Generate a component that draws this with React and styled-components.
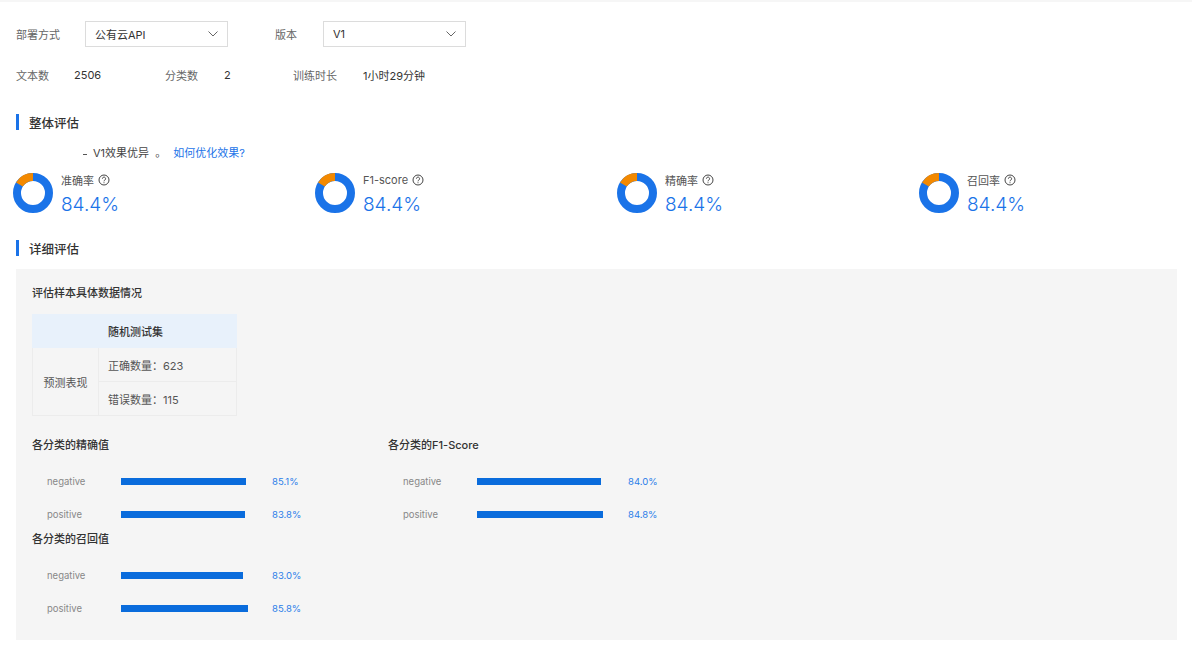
import styled, { createGlobalStyle } from "styled-components";

const GlobalStyle = createGlobalStyle`
  html, body {
    margin: 0;
    padding: 0;
    background: #fff;
    font-family: Inter, "Noto Sans CJK SC", sans-serif;
    color: #333;
  }
`;

const Page = styled.div`
  box-sizing: border-box;
  width: 1192px;
  height: 653px;
  overflow: hidden;
  padding: 21px 15px 0 16px;
  border-top: 2px solid #f6f6f6;
`;

const FilterRow = styled.div`
  display: flex;
  align-items: center;
  height: 26px;
  margin-top: -2px;
`;

const FilterLabel = styled.span`
  width: ${p => p.$width}px;
  font-size: 11px;
  color: #666;
`;

const Select = styled.div`
  box-sizing: border-box;
  display: flex;
  align-items: center;
  justify-content: space-between;
  width: 143px;
  height: 26px;
  padding: 0 8px 0 9px;
  margin-right: ${p => p.$gap || 0}px;
  background: #fff;
  border: 1px solid #dcdcdc;
  font-size: 11px;
  color: #333;
`;

const StatRow = styled.div`
  display: flex;
  align-items: center;
  height: 16px;
  margin-top: 20px;
  font-size: 11px;
`;

const StatLabel = styled.span`
  width: ${p => p.$width}px;
  color: #666;
`;

const StatValue = styled.span`
  width: ${p => p.$width}px;
  color: #333;
`;

const SectionTitle = styled.h2`
  display: flex;
  align-items: center;
  height: 16px;
  margin: ${p => p.$top}px 0 0;
  padding-left: 10px;
  border-left: 3px solid #1a73e8;
  font-size: 12.5px;
  font-weight: 500;
  color: #333;
`;

const Summary = styled.div`
  display: flex;
  align-items: center;
  height: 14px;
  margin-top: 15px;
  padding-left: 67px;
  font-size: 11px;
  color: #444;
`;

const Tick = styled.i`
  width: 4px;
  height: 1px;
  margin: 4px 6px 0 0;
  background: #555;
`;

const HelpLink = styled.a`
  margin-left: 7px;
  color: #1a73e8;
`;

const Metrics = styled.div`
  display: grid;
  grid-template-columns: repeat(4, 302px);
  margin: 14px 0 0 -3px;
`;

const Metric = styled.div`
  display: flex;
  gap: 8px;
  align-items: flex-start;
  height: 40px;
`;

const MetricText = styled.div`
  display: flex;
  flex-direction: column;
`;

const MetricName = styled.div`
  display: flex;
  align-items: center;
  gap: 4px;
  height: 14px;
  font-size: 11px;
  color: #555;
`;

const MetricValue = styled.div`
  height: 27px;
  margin-top: 4px;
  font-size: 19px;
  font-weight: 300;
  line-height: 27px;
  color: #1a73e8;
`;

const Panel = styled.section`
  box-sizing: border-box;
  height: 371px;
  margin-top: 13px;
  padding: 17px 16px 0;
  background: #f5f5f5;
`;

const PanelTitle = styled.h3`
  margin: 0;
  height: 14px;
  font-size: 11px;
  font-weight: 500;
  line-height: 14px;
  color: #333;
`;

const Table = styled.div`
  display: grid;
  grid-template-columns: 67px 138px;
  grid-template-rows: 34px 34px 34px;
  width: 205px;
  margin-top: 14px;
  font-size: 11px;
  color: #555;
`;

const TableHead = styled.div`
  grid-column: 1 / 3;
  display: flex;
  align-items: center;
  padding-left: 76px;
  background: #e8f1fb;
  font-weight: 500;
  color: #333;
`;

const TableSide = styled.div`
  grid-row: 2 / 4;
  display: flex;
  align-items: center;
  justify-content: center;
  border: 1px solid #ececec;
  border-top: 0;
`;

const TableCell = styled.div`
  display: flex;
  align-items: center;
  padding-left: 9px;
  border-right: 1px solid #ececec;
  border-bottom: 1px solid #ececec;
`;

const ChartGrid = styled.div`
  display: grid;
  grid-template-columns: 356px 356px;
  margin-top: 22px;
`;

const ChartBlock = styled.div`
  height: 94px;
`;

const ChartTitle = styled.h4`
  margin: 0 0 22.5px;
  height: 14px;
  font-size: 11px;
  font-weight: 500;
  line-height: 14px;
  color: #333;
`;

const ChartRows = styled.div`
  display: flex;
  flex-direction: column;
  gap: 18.5px;
`;

const ChartRow = styled.div`
  display: flex;
  align-items: center;
  height: 14px;
  font-size: 9.5px;
  color: #888;
`;

const ChartLabel = styled.span`
  box-sizing: border-box;
  width: 89px;
  padding-left: 15px;
`;

const BarTrack = styled.div`
  width: 151px;
`;

const Bar = styled.div`
  height: 7px;
  background: #0a6cdc;
`;

const ChartValue = styled.span`
  color: #2b7de9;
`;

const Chevron = () => (
  <svg width="12" height="12" viewBox="0 0 12 12" fill="none" stroke="#666" strokeWidth="1">
    <path d="M1.5 3.5 6 8 10.5 3.5" />
  </svg>
);

const HelpIcon = () => (
  <svg width="12" height="12" viewBox="0 0 12 12" fill="none" stroke="#444" strokeWidth="1">
    <circle cx="6" cy="6" r="5" />
    <path d="M4.4 4.7a1.6 1.6 0 1 1 2.5 1.3c-.6.4-.9.7-.9 1.3" />
    <path d="M6 8.3v.9" />
  </svg>
);

// ring with the orange share ending at 12 o'clock
const Donut = () => (
  <svg width="40" height="40" viewBox="0 0 40 40" fill="none" strokeWidth="8">
    <circle cx="20" cy="20" r="16" stroke="#1a73e8" />
    <path d="M6.4 11.5A16 16 0 0 1 20 4" stroke="#f38900" />
  </svg>
);

const metrics = ["准确率", "F1-score", "精确率", "召回率"];

const charts = [
  {
    title: "各分类的精确值",
    rows: [
      ["negative", 85.1, 125],
      ["positive", 83.8, 123.5],
    ],
  },
  {
    title: "各分类的F1-Score",
    rows: [
      ["negative", 84.0, 124],
      ["positive", 84.8, 125.5],
    ],
  },
  {
    title: "各分类的召回值",
    rows: [
      ["negative", 83.0, 122],
      ["positive", 85.8, 127],
    ],
  },
];

export default function App() {
  return (
    <Page>
      <GlobalStyle />
      <FilterRow>
        <FilterLabel $width={69}>部署方式</FilterLabel>
        <Select $gap={47}>
          公有云API
          <Chevron />
        </Select>
        <FilterLabel $width={48}>版本</FilterLabel>
        <Select>
          V1
          <Chevron />
        </Select>
      </FilterRow>
      <StatRow>
        <StatLabel $width={58}>文本数</StatLabel>
        <StatValue $width={91}>2506</StatValue>
        <StatLabel $width={59}>分类数</StatLabel>
        <StatValue $width={69}>2</StatValue>
        <StatLabel $width={70}>训练时长</StatLabel>
        <StatValue>1小时29分钟</StatValue>
      </StatRow>
      <SectionTitle $top={31}>整体评估</SectionTitle>
      <Summary>
        <Tick />
        V1效果优异&nbsp;&nbsp;。
        <HelpLink>如何优化效果?</HelpLink>
      </Summary>
      <Metrics>
        {metrics.map(name => (
          <Metric key={name}>
            <Donut />
            <MetricText>
              <MetricName>
                {name}
                <HelpIcon />
              </MetricName>
              <MetricValue>84.4%</MetricValue>
            </MetricText>
          </Metric>
        ))}
      </Metrics>
      <SectionTitle $top={27}>详细评估</SectionTitle>
      <Panel>
        <PanelTitle>评估样本具体数据情况</PanelTitle>
        <Table>
          <TableHead>随机测试集</TableHead>
          <TableSide>预测表现</TableSide>
          <TableCell>正确数量：623</TableCell>
          <TableCell>错误数量：115</TableCell>
        </Table>
        <ChartGrid>
          {charts.map(chart => (
            <ChartBlock key={chart.title}>
              <ChartTitle>{chart.title}</ChartTitle>
              <ChartRows>
                {chart.rows.map(([label, value, width]) => (
                  <ChartRow key={label}>
                    <ChartLabel>{label}</ChartLabel>
                    <BarTrack>
                      <Bar style={{ width }} />
                    </BarTrack>
                    <ChartValue>{value.toFixed(1)}%</ChartValue>
                  </ChartRow>
                ))}
              </ChartRows>
            </ChartBlock>
          ))}
        </ChartGrid>
      </Panel>
    </Page>
  );
}
